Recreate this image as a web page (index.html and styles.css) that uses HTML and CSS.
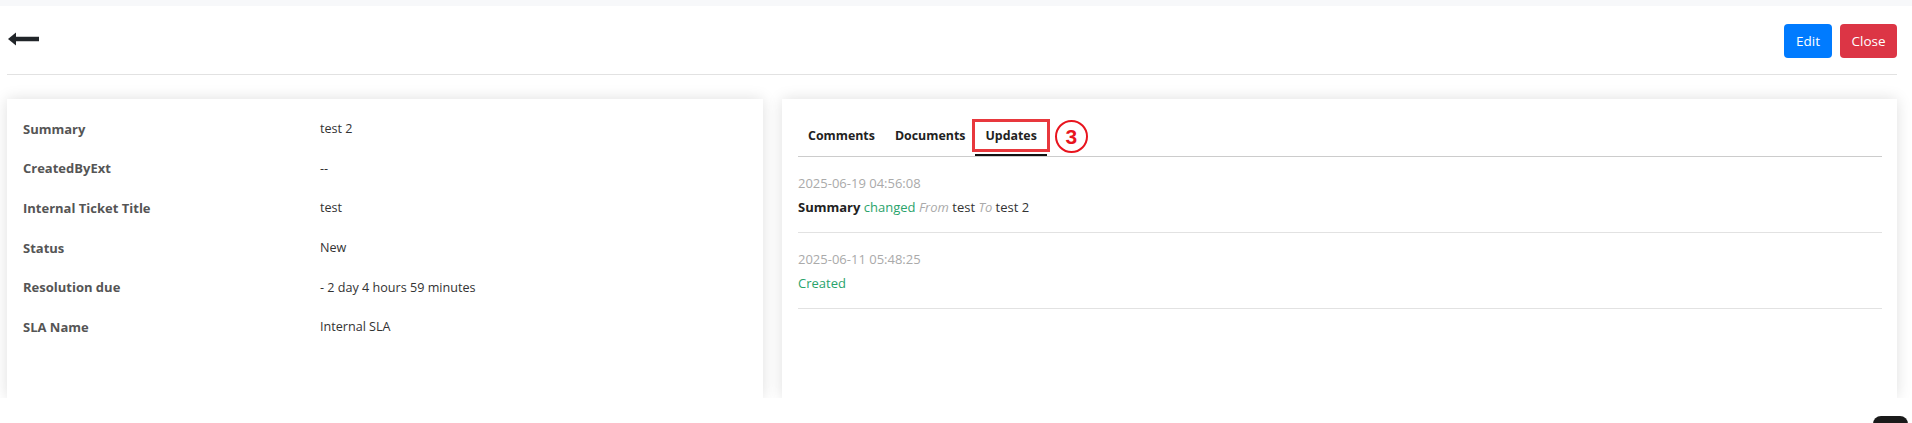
FILE: index.html
```html
<!DOCTYPE html>
<html>
<head>
    <title>Ticket</title>
    <link rel="stylesheet" href="styles.css">
</head>
<body>
    <div class="top-strip"></div>
    <div class="page">
        <div class="header">
            <a class="back" href="#">
                <svg width="32" height="14" viewBox="0 0 32 14">
                    <path d="M31 7H6" stroke="#212529" stroke-width="4.5"/>
                    <path d="M0 7L8 0.5V13.5Z" fill="#212529"/>
                </svg>
            </a>
            <div class="actions">
                <button class="btn btn-edit">Edit</button>
                <button class="btn btn-close">Close</button>
            </div>
        </div>
        <div class="content">
            <div class="card card-info">
                <div class="info-row"><span class="info-label">Summary</span><span class="info-value">test 2</span></div>
                <div class="info-row"><span class="info-label">CreatedByExt</span><span class="info-value">--</span></div>
                <div class="info-row"><span class="info-label">Internal Ticket Title</span><span class="info-value">test</span></div>
                <div class="info-row"><span class="info-label">Status</span><span class="info-value">New</span></div>
                <div class="info-row"><span class="info-label">Resolution due</span><span class="info-value">- 2 day 4 hours 59 minutes</span></div>
                <div class="info-row"><span class="info-label">SLA Name</span><span class="info-value">Internal SLA</span></div>
            </div>
            <div class="card card-tabs">
                <div class="tabs">
                    <div class="tab">Comments</div>
                    <div class="tab">Documents</div>
                    <div class="tab active"><span class="mark">Updates</span></div>
                    <div class="step">3</div>
                </div>
                <ul class="updates">
                    <li>
                        <div class="update-date">2025-06-19 04:56:08</div>
                        <div class="update-text"><b>Summary</b> <span class="green">changed</span> <i>From</i> test <i>To</i> test 2</div>
                    </li>
                    <li>
                        <div class="update-date">2025-06-11 05:48:25</div>
                        <div class="update-text"><span class="green">Created</span></div>
                    </li>
                </ul>
            </div>
        </div>
    </div>
    <div class="chat-fab"></div>
</body>
</html>
```

FILE: styles.css
```css
body {
    margin: 0;
    padding: 0;
    font-family: "Segoe UI", "Open Sans", "Noto Sans", sans-serif;
    font-size: 13px;
    color: #333;
    background-color: #fff;
    overflow: hidden;
}
.top-strip {
    height: 6px;
    background-color: #f7f8fa;
}
.page {
    padding: 0 15px 0 7px;
}
.header {
    display: flex;
    align-items: center;
    justify-content: space-between;
    height: 68px;
    border-bottom: 1px solid #e2e2e2;
}
.back {
    display: flex;
    margin-left: 1px;
    margin-top: -2px;
}
.actions {
    display: flex;
    gap: 8px;
    margin-top: 2px;
}
.btn {
    border: none;
    border-radius: 4px;
    color: #fff;
    font-family: inherit;
    font-size: 13.5px;
    height: 34px;
    padding: 0;
    cursor: pointer;
}
.btn-edit {
    background-color: #007bff;
    width: 48px;
}
.btn-close {
    background-color: #dc3545;
    width: 57px;
}
.content {
    display: flex;
    gap: 19px;
    margin-top: 24px;
}
.card {
    background-color: #fff;
    box-shadow: 0 0 14px rgba(0, 0, 0, 0.13);
    height: 299px;
    box-sizing: border-box;
}
.card-info {
    width: 756px;
    padding: 10px 16px;
}
.info-row {
    display: flex;
    height: 39.6px;
    align-items: center;
}
.info-label {
    width: 297px;
    font-weight: bold;
    color: #555;
}
.info-value {
    font-size: 12.6px;
    color: #333;
}
.card-tabs {
    flex: 1;
    padding: 20px 15px 0 16px;
}
.tabs {
    display: flex;
    align-items: flex-start;
    border-bottom: 1px solid #ccc;
}
.tab {
    padding: 0 10px;
    height: 37px;
    line-height: 34px;
    font-size: 12.4px;
    font-weight: bold;
    color: #222;
    box-sizing: border-box;
    border-bottom: 2px solid transparent;
}
.tab.active {
    border-bottom-color: #111;
}
.mark {
    display: block;
    height: 33px;
    box-sizing: border-box;
    line-height: 27px;
    border: 3px solid #e8383d;
    margin: 0 -13px 2px;
    padding: 0 10px;
}
.step {
    width: 33px;
    height: 33px;
    box-sizing: border-box;
    border: 2.5px solid #e8141e;
    border-radius: 50%;
    color: #e8141e;
    font-weight: bold;
    font-size: 21px;
    font-family: "Liberation Sans", Arial, sans-serif;
    display: flex;
    align-items: center;
    justify-content: center;
    margin-left: 8px;
    margin-top: 1px;
}
.updates {
    list-style: none;
    margin: 0;
    padding: 0;
}
.updates li {
    padding: 16px 0 15px;
    border-bottom: 1px solid #e2e2e2;
}
.update-date {
    color: #aaa;
    line-height: 20px;
    margin-bottom: 4px;
}
.update-text {
    line-height: 20px;
    color: #333;
}
.update-text b {
    color: #222;
}
.update-text i {
    color: #aaa;
}
.green {
    color: #2aa36b;
}
.chat-fab {
    position: fixed;
    right: 4px;
    bottom: -30px;
    width: 35px;
    height: 37px;
    border-radius: 8px;
    background-color: #1a1a1a;
}
```
